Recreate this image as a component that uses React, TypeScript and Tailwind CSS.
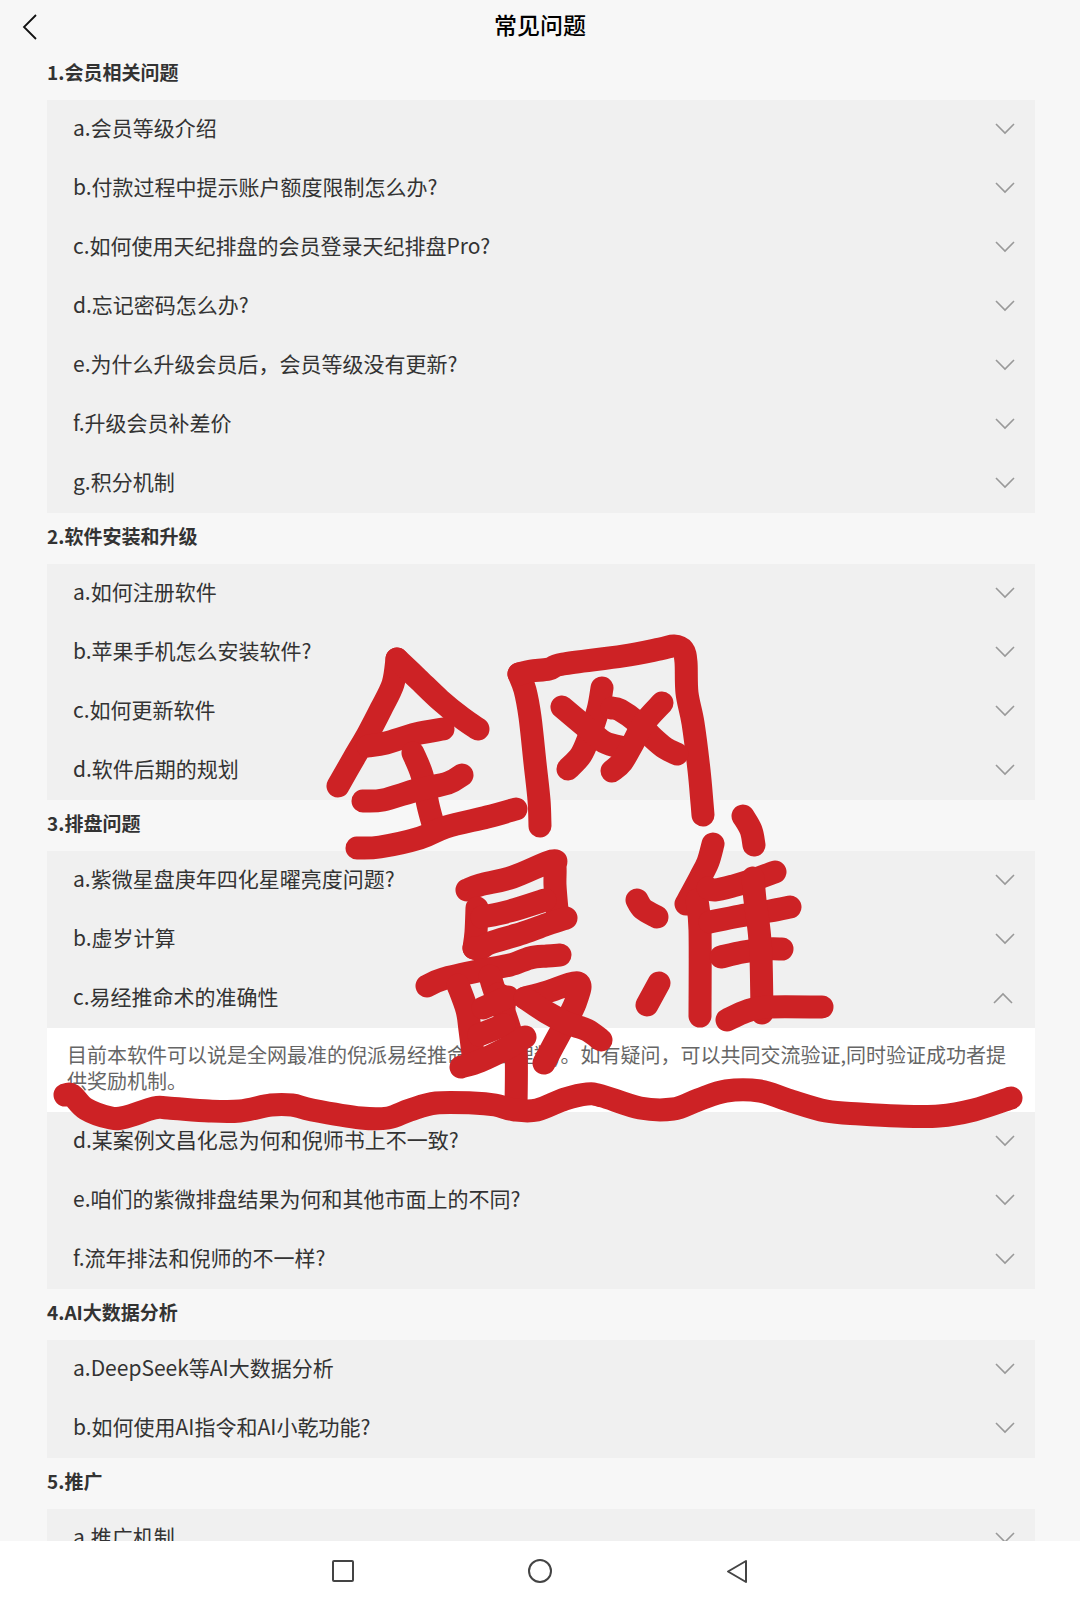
import React, { useState } from "react";

const sections = [
  {
    title: "1.会员相关问题",
    items: [
      { q: "a.会员等级介绍" },
      { q: "b.付款过程中提示账户额度限制怎么办?" },
      { q: "c.如何使用天纪排盘的会员登录天纪排盘Pro?" },
      { q: "d.忘记密码怎么办?" },
      { q: "e.为什么升级会员后，会员等级没有更新?" },
      { q: "f.升级会员补差价" },
      { q: "g.积分机制" },
    ],
  },
  {
    title: "2.软件安装和升级",
    items: [
      { q: "a.如何注册软件" },
      { q: "b.苹果手机怎么安装软件?" },
      { q: "c.如何更新软件" },
      { q: "d.软件后期的规划" },
    ],
  },
  {
    title: "3.排盘问题",
    items: [
      { q: "a.紫微星盘庚年四化星曜亮度问题?" },
      { q: "b.虚岁计算" },
      {
        q: "c.易经推命术的准确性",
        a: "目前本软件可以说是全网最准的倪派易经推命术(含理数)。如有疑问，可以共同交流验证,同时验证成功者提供奖励机制。",
      },
      { q: "d.某案例文昌化忌为何和倪师书上不一致?" },
      { q: "e.咱们的紫微排盘结果为何和其他市面上的不同?" },
      { q: "f.流年排法和倪师的不一样?" },
    ],
  },
  {
    title: "4.AI大数据分析",
    items: [
      { q: "a.DeepSeek等AI大数据分析" },
      { q: "b.如何使用AI指令和AI小乾功能?" },
    ],
  },
  {
    title: "5.推广",
    items: [{ q: "a.推广机制" }],
  },
];

// Brush strokes, each one a list of x,y points
const strokes = [
  // 全
  [397, 659, 393, 684, 381, 709, 368, 734, 354, 758, 338, 786],
  [397, 659, 418, 679, 440, 700, 462, 718, 478, 729],
  [368, 746, 386, 743, 416, 734, 443, 729],
  [413, 753, 422, 775, 428, 805, 433, 824],
  [363, 801, 383, 800, 417, 790, 448, 783, 462, 775],
  [357, 848, 380, 847, 420, 838, 446, 827, 487, 817, 516, 809],
  // 网
  [519, 674, 525, 690, 530, 717, 535, 763, 539, 800, 540, 826],
  [519, 674, 531, 671, 549, 669, 563, 664, 623, 656, 660, 649, 674, 646, 683, 650, 686, 662, 687, 693, 693, 723, 699, 770, 702, 803, 703, 815],
  [602, 688, 598, 710, 589, 737, 581, 755, 568, 769],
  [562, 707, 587, 728, 604, 742, 624, 748],
  [612, 708, 620, 710, 637, 722, 653, 738, 665, 748, 677, 754],
  [662, 703, 644, 723, 633, 743, 622, 762, 612, 771],
  // 最
  [467, 890, 480, 885, 513, 877, 552, 861, 555, 867, 555, 885, 557, 910],
  [477, 908, 476, 932, 474, 948],
  [482, 917, 510, 911, 545, 900],
  [474, 948, 480, 949, 490, 943, 523, 933, 548, 924, 566, 918],
  [427, 986, 443, 979, 483, 970, 510, 965, 530, 958, 547, 956, 560, 955],
  [458, 985, 467, 1010, 470, 1030, 473, 1054],
  [490, 976, 495, 992, 504, 1012, 510, 1030, 516, 1052, 516, 1108],
  [498, 994, 504, 998, 504, 1008],
  [483, 1008, 508, 997],
  [479, 1035, 504, 1025],
  [461, 1067, 480, 1061, 507, 1048, 525, 1037],
  [525, 998, 547, 992, 578, 983, 576, 1001, 567, 1020, 553, 1046, 544, 1063],
  [525, 998, 546, 1012, 567, 1023, 587, 1030, 601, 1040],
  // 准
  [637, 900, 643, 909, 657, 917],
  [659, 983, 647, 1005],
  [713, 844, 708, 862, 700, 878, 686, 904],
  [697, 900, 700, 930, 700, 1016],
  [743, 816, 751, 830, 754, 845],
  [708, 888, 715, 890, 733, 886, 753, 880, 775, 872],
  [710, 922, 740, 916, 770, 911, 790, 907],
  [721, 957, 743, 952, 767, 949, 782, 949],
  [753, 878, 755, 900, 759, 930, 761, 957, 762, 1013],
  [727, 1020, 747, 1011, 767, 1007, 822, 1007],
  // underline
  [65, 1095, 72, 1095, 86, 1109, 111, 1118, 126, 1117, 154, 1108, 168, 1108, 209, 1111, 240, 1111, 271, 1105, 292, 1105, 312, 1110, 361, 1118, 388, 1118, 410, 1110, 436, 1103, 473, 1103, 495, 1105, 515, 1110, 537, 1110, 565, 1099, 587, 1094, 602, 1096, 640, 1108, 673, 1109, 698, 1100, 726, 1091, 760, 1091, 788, 1100, 826, 1111, 860, 1114, 898, 1116, 939, 1116, 974, 1110, 1011, 1098],
];

// Runs a rounded line through the points
const toPath = (p) => {
  if (p.length === 4) return `M${p[0]} ${p[1]}L${p[2]} ${p[3]}`;
  let d = `M${p[0]} ${p[1]}`;
  for (let i = 0; i < p.length - 2; i += 2) {
    const x0 = p[i - 2] ?? p[i];
    const y0 = p[i - 1] ?? p[i + 1];
    const x1 = p[i];
    const y1 = p[i + 1];
    const x2 = p[i + 2];
    const y2 = p[i + 3];
    const x3 = p[i + 4] ?? x2;
    const y3 = p[i + 5] ?? y2;
    d += `C${x1 + (x2 - x0) / 6} ${y1 + (y2 - y0) / 6} ${x2 - (x3 - x1) / 6} ${y2 - (y3 - y1) / 6} ${x2} ${y2}`;
  }
  return d;
};

const Chevron = ({ open }) => (
  <svg
    viewBox="0 0 22 12"
    className={`w-[22px] h-3 shrink-0 ${open ? "rotate-180" : ""}`}
    fill="none"
    stroke="#999"
    strokeWidth="1.6"
  >
    <path d="M3 1 L12 10 L21 1" />
  </svg>
);

const Section = ({ section, openItem, onToggle }) => (
  <section>
    <h2 className="h-[51px] pb-1 flex items-center text-[19px] font-bold text-[#333]">
      {section.title}
    </h2>

    <ul className="bg-[#f0f0f0]">
      {section.items.map((item) => {
        const open = openItem === item.q;
        return (
          <li key={item.q}>
            <button
              type="button"
              aria-expanded={open}
              onClick={() => onToggle(open ? null : item.q)}
              className="w-full h-[59px] pl-[26px] pr-5 pb-0.5 flex items-center justify-between text-left text-[21px] text-[#333] cursor-pointer"
            >
              <span className="pb-0.5">{item.q}</span>
              <Chevron open={open} />
            </button>

            {open && item.a && (
              <p className="bg-white pt-[14px] pb-[18px] px-5 text-xl leading-[26px] text-[#666]">
                {item.a}
              </p>
            )}
          </li>
        );
      })}
    </ul>
  </section>
);

const App = () => {
  const [openItem, setOpenItem] = useState("c.易经推命术的准确性");

  return (
    <div
      className="
        relative h-screen overflow-hidden
        flex flex-col
        bg-[#f7f7f7]
        font-['Noto_Sans_CJK_SC',sans-serif]
      "
    >
      {/* Header */}
      <header className="shrink-0 h-[49px] px-5 grid grid-cols-[24px_1fr_24px] items-center">
        <button type="button" aria-label="返回" className="pt-1 cursor-pointer">
          <svg
            viewBox="0 0 24 28"
            className="w-6 h-7"
            fill="none"
            stroke="#111"
            strokeWidth="1.8"
          >
            <path d="M16 2 L4 14 L16 26" />
          </svg>
        </button>
        <h1 className="text-center text-[23px] font-medium text-black">
          常见问题
        </h1>
      </header>

      {/* Questions */}
      <main className="flex-1 min-h-0 overflow-hidden pl-[47px] pr-[45px]">
        {sections.map((section) => (
          <Section
            key={section.title}
            section={section}
            openItem={openItem}
            onToggle={setOpenItem}
          />
        ))}
      </main>

      {/* System bar */}
      <nav className="shrink-0 h-[60px] bg-white flex items-center justify-center gap-[173px]">
        <button type="button" aria-label="最近任务" className="cursor-pointer">
          <svg viewBox="0 0 24 24" className="w-6 h-6" fill="none" stroke="#444" strokeWidth="2">
            <rect x="2" y="2" width="20" height="20" rx="1" />
          </svg>
        </button>
        <button type="button" aria-label="主页" className="cursor-pointer">
          <svg viewBox="0 0 24 24" className="w-6 h-6" fill="none" stroke="#444" strokeWidth="2">
            <circle cx="12" cy="12" r="11" />
          </svg>
        </button>
        <button type="button" aria-label="后退" className="cursor-pointer">
          <svg
            viewBox="0 0 24 24"
            className="w-6 h-6"
            fill="none"
            stroke="#444"
            strokeWidth="2"
            strokeLinejoin="round"
          >
            <path d="M3 12.5 L21 2 V23 Z" />
          </svg>
        </button>
      </nav>

      {/* Handwriting over the page */}
      <svg
        viewBox="0 0 1080 1601"
        className="absolute top-0 left-0 w-full pointer-events-none"
        fill="none"
        stroke="#cd2225"
        strokeWidth="23"
        strokeLinecap="round"
        strokeLinejoin="round"
      >
        {strokes.map((points, idx) => (
          <path key={idx} d={toPath(points)} />
        ))}
      </svg>
    </div>
  );
};

export default App;
